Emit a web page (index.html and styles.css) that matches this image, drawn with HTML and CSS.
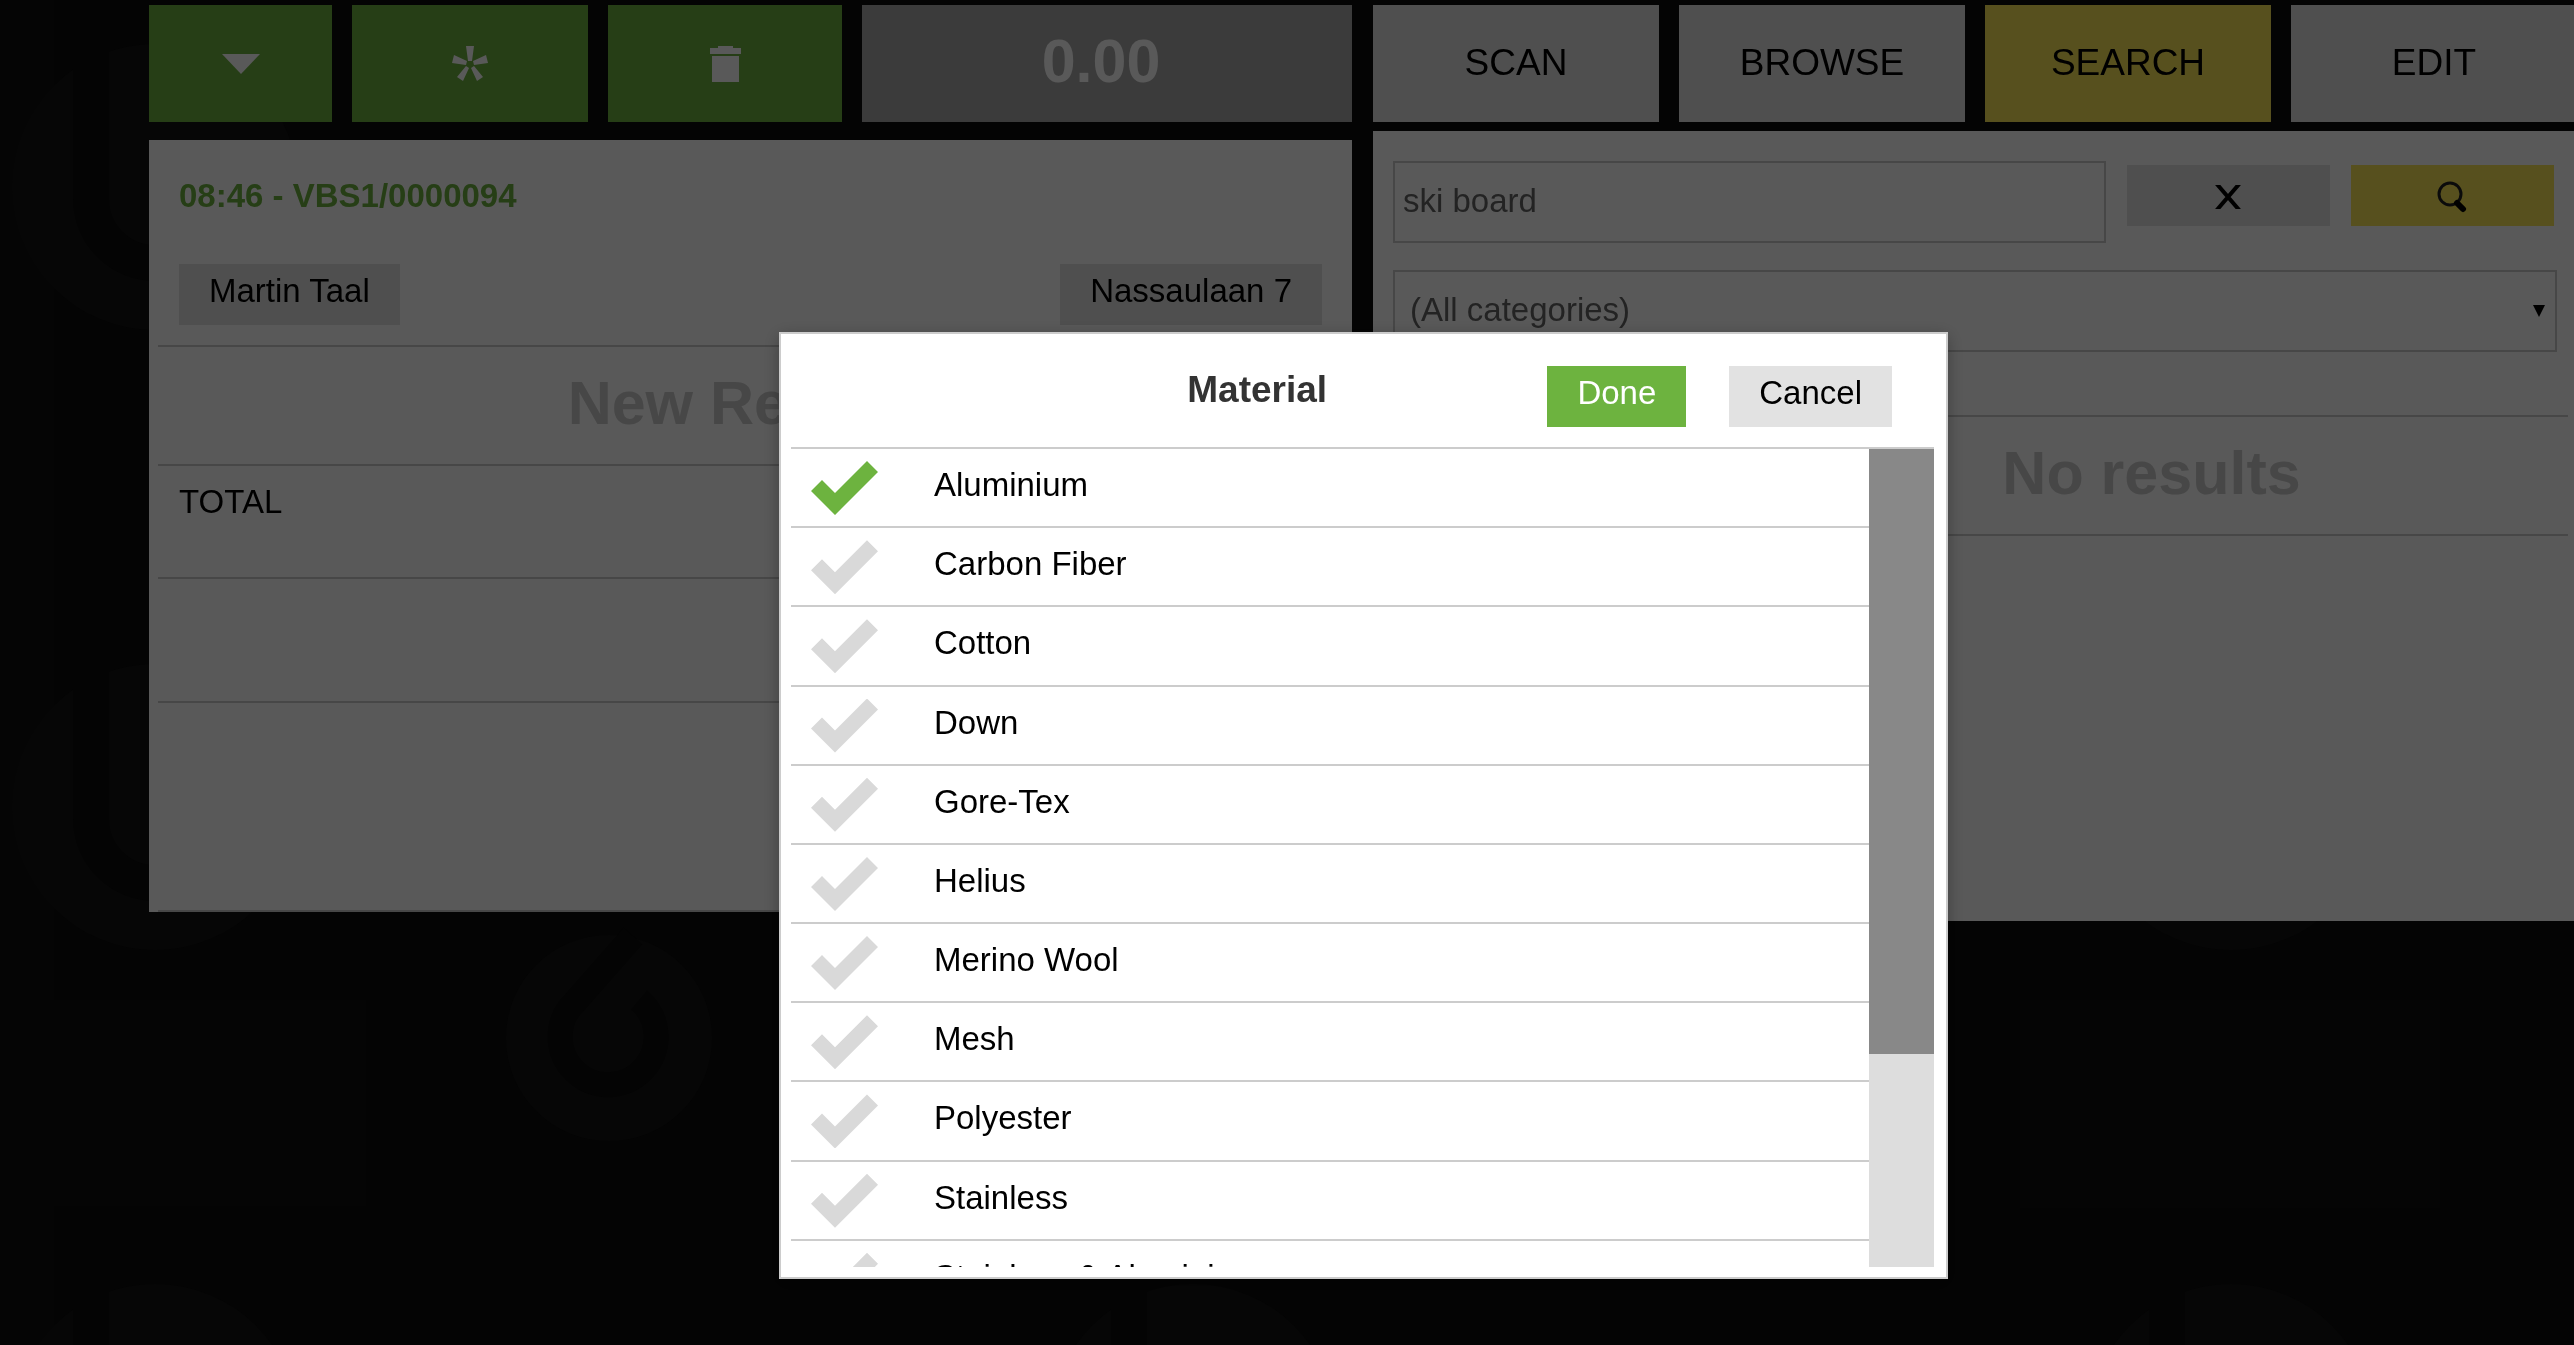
FILE: index.html
```html
<!DOCTYPE html>
<html lang="en">
<head>
<meta charset="utf-8">
<title>Point of sale</title>
<link rel="stylesheet" href="styles.css">
</head>
<body>
<svg class="backdrop" aria-hidden="true">
  <defs>
    <g id="u-mark">
      <circle class="disc" r="143"/>
      <path class="groove groove-wide" d="M-64 -150V12A64 64 0 0 0 64 12"/>
    </g>
    <g id="ring-mark">
      <circle class="disc" r="103"/>
      <path class="groove" d="M24 -102L-34 -36A48 48 0 1 0 30 -38"/>
    </g>
  </defs>
  <g class="tiles">
    <rect x="0" y="0" width="54" height="1345"/>
    <rect x="54" y="1000" width="312" height="206"/>
    <rect x="2020" y="1000" width="420" height="208"/>
  </g>
  <use href="#u-mark" x="155" y="187"/>
  <use href="#u-mark" x="155" y="807"/>
  <use href="#u-mark" x="155" y="1427"/>
  <use href="#u-mark" x="1193" y="1427"/>
  <use href="#u-mark" x="2231" y="807"/>
  <use href="#u-mark" x="2231" y="1427"/>
  <use href="#ring-mark" x="609" y="1038"/>
</svg>

<div class="register">
  <main class="columns">
    <section class="receipt-side">
      <div class="toolbar">
        <button class="tool" type="button" aria-label="Menu"><svg width="38" height="20" viewBox="0 0 38 20"><path d="M0 0H38L19 20Z"/></svg></button>
        <button class="tool" type="button" aria-label="Options"><svg width="36" height="35" viewBox="0 0 36 35"><path d="M14 0H22L20 15H16ZM2 9L0 17L14 19L15 15ZM34 9L36 17L22 19L21 15ZM5 31L11 35L17 22L14 20ZM31 31L25 35L19 22L22 20Z"/></svg></button>
        <button class="tool" type="button" aria-label="Delete"><svg width="31" height="36" viewBox="0 0 31 36"><path d="M0 2H8V0H23V2H31V8H0ZM2 10H29V36H2Z"/></svg></button>
        <output class="amount">0.00</output>
      </div>
      <div class="receipt">
        <h1 class="receipt-id">08:46 - VBS1/0000094</h1>
        <div class="parties">
          <button class="btn" type="button">Martin Taal</button>
          <button class="btn" type="button">Nassaulaan 7</button>
        </div>
        <p class="notice">New Receipt</p>
        <p class="total">TOTAL</p>
        <div class="payment"></div>
        <div class="remainder"></div>
      </div>
    </section>

    <section class="search-side">
      <nav class="tabs">
        <button class="tab" type="button">SCAN</button>
        <button class="tab" type="button">BROWSE</button>
        <button class="tab tab-active" type="button">SEARCH</button>
        <button class="tab" type="button">EDIT</button>
      </nav>
      <div class="finder">
        <form class="query">
          <div class="query-row">
            <input class="field" type="text" value="ski board" aria-label="Search text">
            <button class="btn btn-query" type="button" aria-label="Clear"><svg width="26" height="24" viewBox="0 0 26 24"><path d="M1 -2L25 26M25 -2L1 26" fill="none" stroke="#000" stroke-width="4"/></svg></button>
            <button class="btn btn-query btn-yellow" type="button" aria-label="Search"><svg width="30" height="32" viewBox="0 0 30 32"><circle cx="13" cy="13" r="11" fill="none" stroke="#222" stroke-width="3"/><path d="M20 22L26 28" stroke="#000" stroke-width="6" stroke-linecap="round"/></svg></button>
          </div>
          <div class="category">
            <select class="field" aria-label="Category"><option>(All categories)</option></select>
          </div>
        </form>
        <p class="notice no-results">No results</p>
      </div>
    </section>
  </main>
</div>

<div class="overlay">
  <div class="dialog" role="dialog" aria-modal="true" aria-labelledby="dialog-title">
    <header class="dialog-head">
      <h2 class="dialog-title" id="dialog-title">Material</h2>
      <button class="btn btn-green" type="button">Done</button>
      <button class="btn" type="button">Cancel</button>
    </header>
    <div class="dialog-body">
      <div class="options-view">
        <ul class="options">
          <li class="option"><label><input class="check" type="checkbox" checked>Aluminium</label></li>
          <li class="option"><label><input class="check" type="checkbox">Carbon Fiber</label></li>
          <li class="option"><label><input class="check" type="checkbox">Cotton</label></li>
          <li class="option"><label><input class="check" type="checkbox">Down</label></li>
          <li class="option"><label><input class="check" type="checkbox">Gore-Tex</label></li>
          <li class="option"><label><input class="check" type="checkbox">Helius</label></li>
          <li class="option"><label><input class="check" type="checkbox">Merino Wool</label></li>
          <li class="option"><label><input class="check" type="checkbox">Mesh</label></li>
          <li class="option"><label><input class="check" type="checkbox">Polyester</label></li>
          <li class="option"><label><input class="check" type="checkbox">Stainless</label></li>
          <li class="option"><label><input class="check" type="checkbox">Stainless &amp; Aluminium</label></li>
        </ul>
      </div>
      <div class="scroll-track"><div class="scroll-thumb"></div></div>
    </div>
  </div>
</div>
</body>
</html>
```
FILE: styles.css
```css
* {
  box-sizing: border-box;
}

body {
  margin: 0;
  min-height: 100vh;
  overflow: hidden;
  background: #0c0c0c;
  color: #000;
  font-family: "Liberation Sans", Arial, Helvetica, sans-serif;
  font-size: 33px;
  line-height: 40px;
}

h1, h2, p, ul {
  margin: 0;
  padding: 0;
}

button, input, select {
  font: inherit;
  border: 0;
  margin: 0;
  border-radius: 0;
}

/* Dark patterned page background */
.backdrop {
  position: fixed;
  inset: 0;
  width: 100%;
  height: 100%;
}

.disc { fill: #131313; }
.groove { fill: none; stroke: #0c0c0c; stroke-width: 25px; }
.groove-wide { stroke-width: 36px; }
.tiles { fill: #101010; }

/* Two columns behind the dialog */
.register {
  position: relative;
  padding: 5px 0 0 149px;
  margin-right: -3px;
}

.columns {
  display: grid;
  grid-template-columns: 1203fr 1204fr;
  gap: 21px;
}

.toolbar {
  display: grid;
  grid-template-columns: 183fr 236fr 234fr 490fr;
  gap: 20px;
  margin-bottom: 18px;
}

.tool {
  display: flex;
  align-items: center;
  justify-content: center;
  height: 117px;
  padding: 0;
  background: #6db33f;
  fill: #fff;
}

.amount {
  padding: 21px 12px 0 0;
  height: 117px;
  background: #a9a9a9;
  color: #fff;
  font-size: 61px;
  font-weight: bold;
  line-height: 70px;
  text-align: center;
}

.tabs {
  display: grid;
  grid-template-columns: repeat(4, 1fr);
  gap: 20px;
  margin-bottom: 9px;
}

.tab {
  height: 117px;
  padding: 0 0 2px;
  background: #e2e2e2;
  color: #000;
  font-size: 37px;
}

.tab-active {
  background: #f9e656;
}

.btn {
  height: 61px;
  padding: 0 30px 7px;
  background: #e2e2e2;
  color: #000;
}

.btn-green {
  background: #6db33f;
  color: #fff;
}

.btn-yellow {
  background: #f9e656;
}

/* Receipt */
.receipt {
  padding: 36px 0 0 9px;
  background: #fff;
}

.receipt-id {
  padding: 0 21px;
  color: #6db33f;
  font-size: 33px;
}

.parties {
  display: flex;
  justify-content: space-between;
  padding: 48px 30px 20px 21px;
}

.notice {
  padding: 21px 12px 26px 0;
  border-top: 2px solid #ccc;
  border-bottom: 2px solid #ccc;
  color: #ccc;
  font-size: 61px;
  font-weight: bold;
  line-height: 70px;
  text-align: center;
}

.total {
  padding: 16px 21px 55px;
  border-bottom: 2px solid #ccc;
}

.payment {
  height: 124px;
  border-bottom: 2px solid #ccc;
}

.remainder {
  height: 209px;
  border-bottom: 2px solid #ccc;
}

/* Product search */
.finder {
  min-height: 790px;
  background: #fff;
}

.query {
  padding: 30px 20px 63px;
}

.query-row {
  display: grid;
  grid-template-columns: 712fr 203fr 203fr;
  gap: 21px;
  align-items: start;
  padding-right: 3px;
}

.field {
  width: 100%;
  height: 82px;
  padding: 0 8px 2px;
  border: 2px solid #ccc;
  background: #fff;
  color: #666;
}

.btn-query {
  display: flex;
  align-items: center;
  justify-content: center;
  margin-top: 4px;
  padding: 3px 0 0;
}

.category {
  position: relative;
  margin-top: 27px;
}

.category .field {
  padding: 0 15px 3px;
  appearance: none;
}

.category::after {
  content: "";
  position: absolute;
  right: 12px;
  top: 35px;
  border: 6px solid transparent;
  border-top: 12px solid #000;
  border-bottom: 0;
}

.no-results {
  margin-right: 9px;
  padding-left: 374px;
}

/* Modal dialog */
.overlay {
  position: fixed;
  inset: 0;
  display: flex;
  align-items: flex-start;
  justify-content: center;
  padding: 332px 0 0 153px;
  background: rgba(0, 0, 0, 0.65);
}

.dialog {
  width: 1169px;
  padding: 0 12px 10px 10px;
  border: 2px solid #ccc;
  background: #fff;
  box-shadow: 0 4px 16px rgba(0, 0, 0, 0.3);
}

.dialog-head {
  display: flex;
  gap: 43px;
  padding: 32px 42px 20px 176px;
  border-bottom: 2px solid #ccc;
}

.dialog-title {
  flex: 1;
  margin-right: -43px;
  color: #333;
  font-size: 37px;
  line-height: 48px;
  text-align: center;
}

.dialog-body {
  display: flex;
  height: 818px;
}

.options-view {
  flex: 1;
  overflow: hidden;
}

.options {
  display: grid;
  grid-auto-rows: 1fr;
  height: 871px;
  list-style: none;
}

.option {
  padding: 12px 20px 0;
  border-bottom: 2px solid #ccc;
  line-height: 48px;
}

.option label {
  display: flex;
  gap: 56px;
}

.check {
  appearance: none;
  width: 67px;
  height: 54px;
  background: #d9d9d9;
  clip-path: polygon(0 30px, 11px 19px, 24px 32px, 56px 0, 67px 11px, 24px 54px);
}

.check:checked {
  background: #6db33f;
}

.scroll-track {
  width: 65px;
  background: #ddd;
}

.scroll-thumb {
  height: 74%;
  background: #888;
}
```
